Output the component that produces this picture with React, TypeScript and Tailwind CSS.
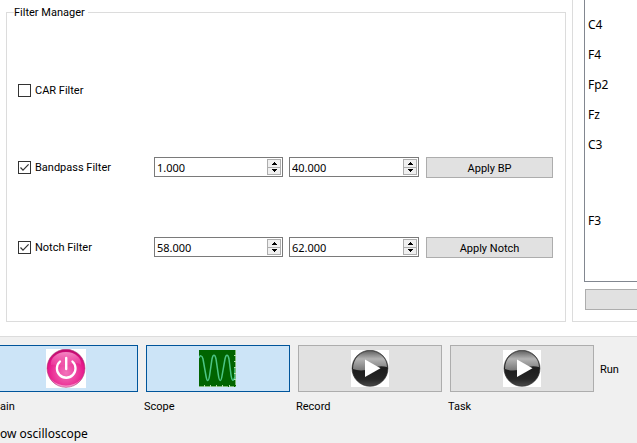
import { useState } from "react";

function SpinBox({ label, initial }: { label: string; initial: number }) {
  const [value, setValue] = useState(initial.toFixed(3));
  const step = (d: number) => setValue((Number(value) + d).toFixed(3));
  return (
    <div className="flex h-5 min-w-0 border border-[#7a7a7a] bg-white p-px">
      <input
        type="text"
        aria-label={label}
        value={value}
        onChange={(e) => setValue(e.target.value)}
        className="min-w-0 flex-1 pt-px pl-px font-['Noto_Sans','Open_Sans',sans-serif] leading-4 outline-none"
      />
      <div className="flex w-[14px] flex-col border border-[#adadad] bg-[#f0f0f0]">
        <button type="button" aria-label={`Increase ${label}`} onClick={() => step(1)} className="flex flex-1 items-center justify-center border-b border-[#adadad]">
          <svg width="5" height="3" viewBox="0 0 5 3" shapeRendering="crispEdges"><path d="M2 0h1v1h1v1h1v1H0V2h1V1h1z" /></svg>
        </button>
        <button type="button" aria-label={`Decrease ${label}`} onClick={() => step(-1)} className="flex flex-1 items-center justify-center">
          <svg width="5" height="3" viewBox="0 0 5 3" shapeRendering="crispEdges"><path d="M0 0h5v1H4v1H3v1H2V2H1V1H0z" /></svg>
        </button>
      </div>
    </div>
  );
}

function Check({ label, on = false }: { label: string; on?: boolean }) {
  return (
    <label className="flex h-5 items-center gap-1">
      <span className="grid size-[13px] shrink-0">
        <input type="checkbox" defaultChecked={on} className="peer col-start-1 row-start-1 size-[13px] appearance-none border border-[#333333] bg-white" />
        <svg viewBox="0 0 13 13" className="pointer-events-none invisible col-start-1 row-start-1 size-[13px] peer-checked:visible">
          <path d="M2.5 6.5L5 9.2L10.6 3.4" fill="none" stroke="#333" strokeWidth="1.2" />
        </svg>
      </span>
      <span className="pt-0.5 whitespace-nowrap">{label}</span>
    </label>
  );
}

function FilterRow({ name, low, high, action }: { name: string; low: number; high: number; action: string }) {
  return (
    <div className="grid grid-cols-[130px_129fr_130fr_128fr] items-start gap-x-1.5">
      <Check label={`${name} Filter`} on />
      <SpinBox label={`${name} low frequency`} initial={low} />
      <SpinBox label={`${name} high frequency`} initial={high} />
      <button type="button" className="ml-px h-[21px] border border-[#adadad] bg-[#e1e1e1] pt-0.5">{action}</button>
    </div>
  );
}

function PowerIcon() {
  return (
    <svg width="40" height="39" viewBox="0 0 40 39">
      <defs>
        <radialGradient id="pink" cx="50%" cy="62%" r="58%">
          <stop offset="0" stopColor="#f273bb" />
          <stop offset="0.55" stopColor="#ec3a9b" />
          <stop offset="0.85" stopColor="#e6158a" />
          <stop offset="1" stopColor="#c40b70" />
        </radialGradient>
        <linearGradient id="pinkGloss" x2="0" y2="1">
          <stop offset="0" stopColor="#fbb3db" stopOpacity="0.75" />
          <stop offset="1" stopColor="#f46fb6" stopOpacity="0.25" />
        </linearGradient>
      </defs>
      <rect width="40" height="39" fill="#fff" />
      <circle cx="20" cy="19.3" r="19" fill="url(#pink)" stroke="#a9447c" strokeWidth="0.6" />
      <path d="M5 30a18 18 0 0 0 30 0a19 17 0 0 1-30 0z" fill="#fbc5e2" opacity="0.6" />
      <path d="M5 16C4 9 11 3 20 3S36 9 35 16c-5-4-8-1-13 0S10 15 5 16z" fill="url(#pinkGloss)" />
      <path d="M14 12.500a9.300 9.300 0 1 0 12.400 0" fill="none" stroke="#fff" strokeWidth="2.3" strokeLinecap="round" />
      <path d="M20.200 9v11" stroke="#fff" strokeWidth="2.4" strokeLinecap="round" />
    </svg>
  );
}

function ScopeIcon() {
  return (
    <svg width="38" height="37" viewBox="0 0 38 37">
      <rect width="37" height="37" fill="#006400" />
      <path d="M0 8C1 5 3 5 4 9L7 26C8 32 9.500 32 10.500 26L13 9C14 4 16 4 17 9L19.500 26C20.500 32 22 32 23 26L26 9C27 4 29 4 30 9L32 25C33 31 34 32 36 27V17" fill="none" stroke="#4cc585" strokeWidth="1.5" />
      <path d="M0 36.500H37M36.500 0V37" stroke="#7fb978" strokeDasharray="5 1" />
      <path d="M5.500 35v2M11.500 35v2M17.500 35v2M23.500 35v2M30.500 35v2M35 5.500h2M35 11.500h2M35 17.500h2M35 23.500h2M35 29.500h2" stroke="#b5dfb0" />
    </svg>
  );
}

function PlayIcon() {
  return (
    <svg width="38" height="37" viewBox="0 0 38 37">
      <defs>
        <linearGradient id="dark" x2="0" y2="1">
          <stop offset="0" stopColor="#555" />
          <stop offset="0.5" stopColor="#1c1c1c" />
          <stop offset="0.8" stopColor="#262626" />
          <stop offset="1" stopColor="#4a4a4a" />
        </linearGradient>
        <linearGradient id="gloss" x2="0" y2="1">
          <stop offset="0" stopColor="#666" />
          <stop offset="0.4" stopColor="#b4b4b4" />
          <stop offset="1" stopColor="#777" />
        </linearGradient>
      </defs>
      <rect width="38" height="37" fill="#fff" />
      <circle cx="19" cy="18.300" r="18" fill="url(#dark)" stroke="#2b2b2b" strokeWidth="0.6" />
      <path d="M2 19C2 8 10 1.200 19 1.200S36 8 36 17C31 15.500 26 16 20 18.500S7 21 2 19z" fill="url(#gloss)" />
      <path d="M14 9.500v17.500L29.500 18.300z" fill="#fff" />
    </svg>
  );
}

const tools = [
  { label: "ain", name: "Main", icon: <PowerIcon />, on: true },
  { label: "Scope", name: "Scope", icon: <ScopeIcon />, on: true },
  { label: "Record", name: "Record", icon: <PlayIcon />, on: false },
  { label: "Task", name: "Task", icon: <PlayIcon />, on: false },
];

const channels = ["C4", "F4", "Fp2", "Fz", "C3"];

export default function App() {
  return (
    <div className="min-h-screen overflow-hidden bg-[#f0f0f0] font-[Roboto,'Noto_Sans',sans-serif] text-[11px] leading-4 text-black">
      <main className="flex gap-1.5 border-b border-[#dcdcdc] bg-white pb-3.5 pl-1.5">
        <fieldset className="mt-1 min-w-0 flex-1 border border-[#dcdcdc] pr-3 pb-[63px] pl-[11px]">
          <legend className="-ml-1 pt-0.5 pr-[3px] leading-[14px]">Filter Manager</legend>
          <div className="flex flex-col gap-[60px] pt-[60px]">
            <Check label="CAR Filter" />
            <div className="-mt-[3px] flex flex-col gap-[59px]">
              <FilterRow name="Bandpass" low={1} high={40} action="Apply BP" />
              <FilterRow name="Notch" low={58} high={62} action="Apply Notch" />
            </div>
          </div>
        </fieldset>
        <aside className="flex w-[65px] flex-col border-b border-l border-[#dcdcdc] pb-[11px] pl-[11px] font-['Noto_Sans','Open_Sans',sans-serif] text-[12px]">
          <ul className="flex-1 border-b border-l border-[#828790] pt-2.5 pl-[3px]">
            {channels.map((c) => (
              <li key={c} className="h-[30px] leading-[30px]">{c}</li>
            ))}
            <li className="mt-[46px] h-[30px] leading-[30px]">F3</li>
          </ul>
          <button type="button" aria-label="Channel action" className="mt-[7px] ml-px h-[21px] border border-r-0 border-[#adadad] bg-[#e1e1e1]" />
        </aside>
      </main>
      <footer>
        <div className="-ml-1.5 flex gap-2 pt-2">
          {tools.map((t) => (
            <div key={t.name} className="w-36 shrink-0">
              <button
                type="button"
                aria-label={t.name}
                aria-pressed={t.on}
                className={
                  "flex h-[47px] w-full items-center justify-center border " +
                  (t.on ? "border-[#00559b] bg-[#cce4f7]" : "border-[#adadad] bg-[#e1e1e1]")
                }
              >
                {t.icon}
              </button>
              <div className={"mt-[7px] " + (t.name === "Main" ? "pl-1.5" : "-ml-0.5")}>{t.label}</div>
            </div>
          ))}
          <span className="mt-[17px] -ml-0.5">Run</span>
        </div>
        <p className="mt-[11px] font-['Noto_Sans','Open_Sans',sans-serif] text-[12px]">ow oscilloscope</p>
      </footer>
    </div>
  );
}
